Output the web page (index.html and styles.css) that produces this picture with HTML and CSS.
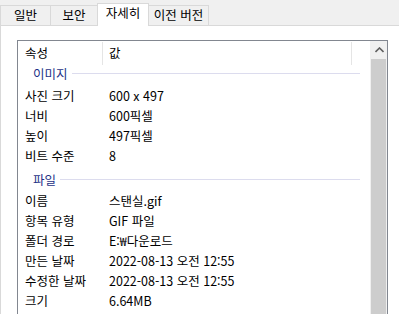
FILE: index.html
```html
<!DOCTYPE html>
<html lang="ko">
<head>
    <meta charset="UTF-8">
    <title>속성 - 자세히</title>
    <link rel="stylesheet" href="styles.css">
</head>
<body>
    <div class="tabs">
        <div class="tab tab-1">일반</div>
        <div class="tab tab-2">보안</div>
        <div class="tab tab-3 selected">자세히</div>
        <div class="tab tab-4">이전 버전</div>
    </div>

    <div class="panel">
        <div class="listbox">
            <div class="list">
                <div class="header">
                    <div class="hcell name-col">속성</div>
                    <div class="hcell value-col">값</div>
                </div>

                <!-- 이미지 -->
                <div class="group first">
                    <span class="group-title">이미지</span>
                    <span class="group-line"></span>
                </div>
                <div class="row"><span class="label">사진 크기</span><span class="value">600 x 497</span></div>
                <div class="row"><span class="label">너비</span><span class="value">600픽셀</span></div>
                <div class="row"><span class="label">높이</span><span class="value">497픽셀</span></div>
                <div class="row"><span class="label">비트 수준</span><span class="value">8</span></div>

                <!-- 파일 -->
                <div class="group">
                    <span class="group-title">파일</span>
                    <span class="group-line"></span>
                </div>
                <div class="row"><span class="label">이름</span><span class="value">스탠실.gif</span></div>
                <div class="row"><span class="label">항목 유형</span><span class="value">GIF 파일</span></div>
                <div class="row"><span class="label">폴더 경로</span><span class="value">E:₩다운로드</span></div>
                <div class="row"><span class="label">만든 날짜</span><span class="value">2022-08-13 오전 12:55</span></div>
                <div class="row"><span class="label">수정한 날짜</span><span class="value">2022-08-13 오전 12:55</span></div>
                <div class="row"><span class="label">크기</span><span class="value">6.64MB</span></div>
            </div>

            <div class="scrollbar">
                <div class="scroll-up">
                    <svg width="9" height="6" viewBox="0 0 9 6">
                        <path d="M0.5 5 L4.5 1 L8.5 5" fill="none" stroke="#606060" stroke-width="1.6"/>
                    </svg>
                </div>
                <div class="thumb"></div>
            </div>
        </div>
    </div>
</body>
</html>
```

FILE: styles.css
```css
body {
    margin: 0;
    overflow: hidden;
    background-color: #f0f0f0;
    font-family: "Noto Sans CJK KR", "Noto Sans", sans-serif;
    font-size: 12.5px;
    color: #000;
    height: 314px;
}

/* Onglets */
.tabs {
    display: flex;
    align-items: flex-end;
    height: 25px;
}

.tab {
    box-sizing: border-box;
    height: 20px;
    line-height: 18px;
    border: 1px solid #d9d9d9;
    border-bottom: none;
    margin-right: -1px;
    text-align: center;
    background-color: #f0f0f0;
}

.tab-1 { width: 51px; }
.tab-2 { width: 48px; }
.tab-3 { width: 52px; }
.tab-4 { width: 61px; }

.tab.selected {
    position: relative;
    z-index: 1;
    height: 23px;
    margin-bottom: -1px;
    line-height: 18px;
    background-color: #fff;
}

/* Panneau blanc */
.panel {
    background-color: #fff;
    border-top: 1px solid #d9d9d9;
    border-left: 1px solid #d9d9d9;
    padding: 14px 0 0 16px;
    height: 274px;
}

.listbox {
    box-sizing: border-box;
    width: 371px;
    height: 274px;
    border: 1px solid #828790;
    border-bottom: none;
    display: flex;
    overflow: hidden;
}

.list {
    flex: 1;
}

.header {
    display: flex;
    height: 24px;
    padding-top: 1px;
    box-sizing: border-box;
}

.hcell {
    box-sizing: border-box;
    border-right: 1px solid #e5e5e5;
    line-height: 22px;
}

.hcell.name-col {
    width: 85px;
    padding-left: 7px;
}

.hcell.value-col {
    width: 249px;
    padding-left: 6px;
}

/* Groupes */
.group {
    display: flex;
    align-items: center;
    height: 16px;
    padding: 5px 10px 0 15px;
    margin-bottom: 4px;
}

.group.first {
    padding-top: 0;
    margin-bottom: 5px;
}

.group-title {
    color: #1e3287;
}

.group-line {
    flex: 1;
    height: 1px;
    margin-left: 4px;
    background-color: #dcdcee;
}

/* Lignes */
.row {
    display: grid;
    grid-template-columns: 85px 1fr;
    height: 20px;
    line-height: 20px;
}

.label {
    padding-left: 7px;
}

.value {
    padding-left: 6px;
}

/* Barre de défilement */
.scrollbar {
    width: 17px;
    background-color: #f0f0f0;
    display: flex;
    flex-direction: column;
}

.scroll-up {
    height: 17px;
    display: flex;
    align-items: center;
    justify-content: center;
    padding-left: 1px;
}

.thumb {
    flex: 1;
    margin: 1px 1px 0 1px;
    background-color: #cdcdcd;
}
```
